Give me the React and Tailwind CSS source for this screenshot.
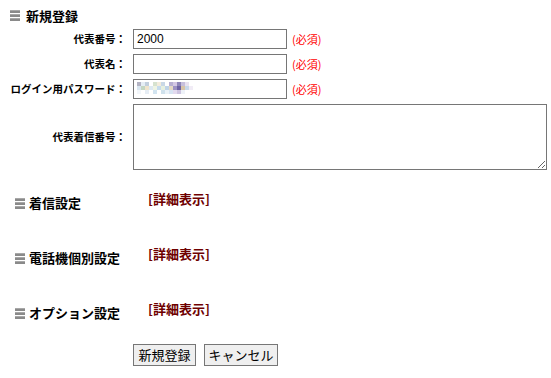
import React from 'react';

// pixelated password mosaic, one colour per 4px cell
const MOSAIC = [
  ['#b4b4c4', '#e6eef5', '#c2cfdd', '#ffffff', '#d6e2cf', '#f3ecdc', '#c9d8e6', '#ffffff', '#b8b0d2', '#d4c8e4', '#8f86b8', '#c7bfdc', '#e9e2f0', '#ffffff'],
  ['#d9e6f0', '#c4d6c2', '#f0e4cc', '#dde9f2', '#eef4e4', '#c6dced', '#e6f0e0', '#bfd4e8', '#e4d9c4', '#9d92c4', '#6f64a4', '#d8c4a8', '#c8d8ea', '#f1ecf6'],
  ['#f2f6fa', '#ffffff', '#e6edf4', '#ffffff', '#d2e4f0', '#ffffff', '#cfe1ec', '#eaf2f8', '#d6e4f2', '#e2daee', '#cdc4e0', '#eef2f8', '#ffffff', '#ffffff'],
];

function BarsIcon() {
  return (
    <svg width="10" height="11" viewBox="0 0 10 11" className="shrink-0">
      {[0, 4, 8].map((y) => (
        <g key={y}>
          <rect x="0" y={y} width="10" height="3" fill="#8a8a8a" />
          <rect x="0" y={y} width="10" height="1" fill="#a8a8a8" />
        </g>
      ))}
    </svg>
  );
}

function Mosaic() {
  return (
    <svg width="56" height="12" viewBox="0 0 56 12" className="absolute left-[4px] top-[3px]">
      {MOSAIC.map((row, r) =>
        row.map((c, i) => <rect key={`${r}-${i}`} x={i * 4} y={r * 4} width="4" height="4" fill={c} />)
      )}
    </svg>
  );
}

function FieldRow({ label, children, tall }) {
  return (
    <div className={`flex items-center ${tall ? 'h-[66px]' : 'h-[20px]'}`}>
      <div className="w-[126px] text-right text-[10.5px] font-bold leading-[14px]">{label}</div>
      <div className="ml-[7px] flex items-center">{children}</div>
    </div>
  );
}

function Required() {
  return <span className="ml-[5px] text-[11px] leading-[14px] text-[#ff0000]">(必須)</span>;
}

function Section({ title }) {
  return (
    <div className="flex items-start">
      <div className="w-[148px] pl-[15px] pt-[4px] flex items-center gap-[4px]">
        <BarsIcon />
        <span className="text-[13px] font-bold leading-[16px]">{title}</span>
      </div>
      <span className="text-[13px] font-bold leading-[16px] text-[#6e0000]">[詳細表示]</span>
    </div>
  );
}

const inputCls =
  'block w-[154px] h-[20px] border border-[#767676] bg-white px-[3px] text-[12px] font-["Liberation_Sans",Arial,sans-serif] outline-none';

export default function App() {
  return (
    <div className="w-[551px] h-[378px] bg-white text-black font-['Noto_Sans_CJK_JP','Noto_Sans',sans-serif] pt-[8px]">
      {/* 新規登録 */}
      <div className="flex items-center h-[15px] pl-[10px] gap-[6px]">
        <BarsIcon />
        <span className="text-[13px] font-bold leading-[15px]">新規登録</span>
      </div>

      <div className="mt-[6px] flex flex-col gap-[5px]">
        <FieldRow label="代表番号：">
          <input className={inputCls} defaultValue="2000" />
          <Required />
        </FieldRow>
        <FieldRow label="代表名：">
          <input className={inputCls} />
          <Required />
        </FieldRow>
        <FieldRow label="ログイン用パスワード：">
          <div className="relative flex">
            <input className={inputCls} />
            <Mosaic />
          </div>
          <Required />
        </FieldRow>
        <FieldRow label="代表着信番号：" tall>
          <textarea className="block w-[414px] h-[66px] border border-[#767676] bg-white outline-none" />
        </FieldRow>
      </div>

      <div className="mt-[21px] flex flex-col gap-[35px]">
        <Section title="着信設定" />
        <Section title="電話機個別設定" />
        <Section title="オプション設定" />
      </div>

      <div className="mt-[23px] ml-[133px] flex gap-[8px]">
        <button className="w-[63px] h-[22px] border border-[#767676] bg-[#efefef] text-[13px] leading-[16px]">
          新規登録
        </button>
        <button className="w-[74px] h-[22px] border border-[#767676] bg-[#efefef] text-[13px] leading-[16px]">
          キャンセル
        </button>
      </div>
    </div>
  );
}
